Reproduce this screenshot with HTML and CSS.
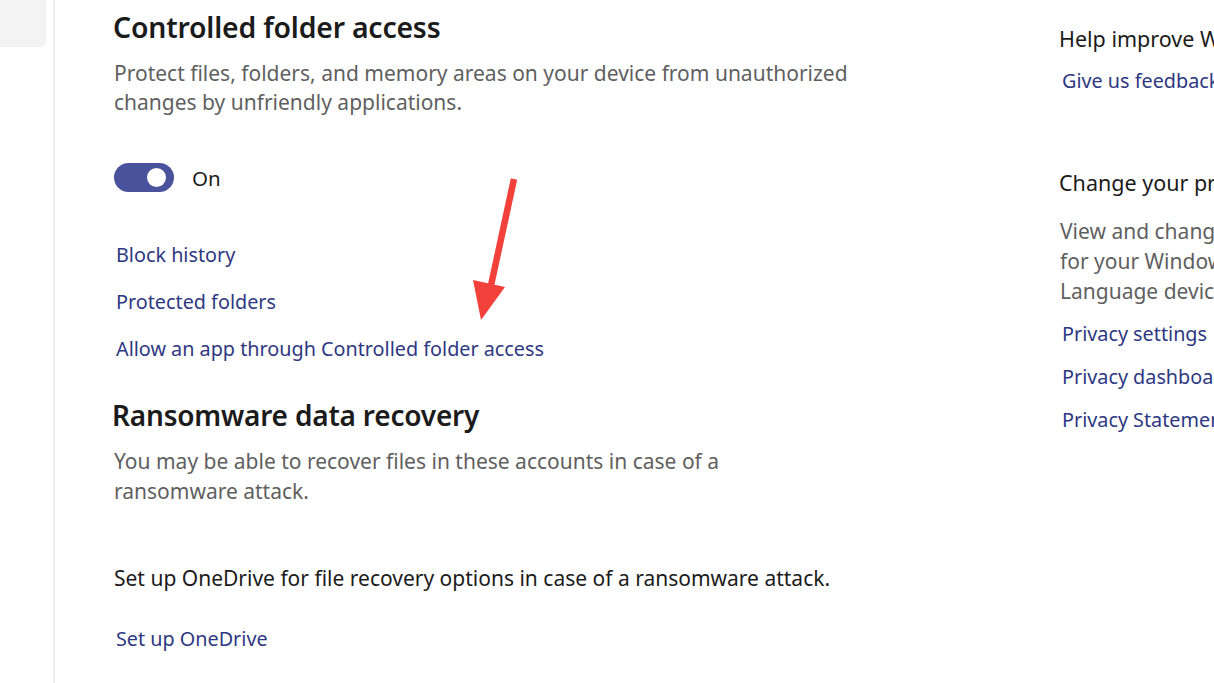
FILE: index.html
```html
<!DOCTYPE html>
<html lang="en">
<head>
<meta charset="utf-8">
<title>Controlled folder access</title>
<link rel="stylesheet" href="styles.css">
</head>
<body>
<div class="app">
  <nav class="nav">
    <div class="nav-item"></div>
  </nav>
  <main class="main">
    <h1 class="title">Controlled folder access</h1>
    <p class="desc desc-wide">Protect files, folders, and memory areas on your device from unauthorized changes by unfriendly applications.</p>
    <div class="toggle-row">
      <span class="toggle"><span class="knob"></span></span>
      <span class="toggle-label">On</span>
    </div>
    <ul class="links">
      <li><a href="#" class="link">Block history</a></li>
      <li><a href="#" class="link">Protected folders</a></li>
      <li><a href="#" class="link">Allow an app through Controlled folder access</a></li>
    </ul>
    <h2 class="title title-2">Ransomware data recovery</h2>
    <p class="desc desc-narrow">You may be able to recover files in these accounts in case of a ransomware attack.</p>
    <p class="plain">Set up OneDrive for file recovery options in case of a ransomware attack.</p>
    <a href="#" class="link link-last">Set up OneDrive</a>
  </main>
  <aside class="aside">
    <h3 class="side-title">Help improve Windows Security</h3>
    <a href="#" class="link side-link">Give us feedback</a>
    <h3 class="side-title side-title-2">Change your privacy settings</h3>
    <p class="side-desc">View and change privacy settings<br>for your Windows 10 device.<br>Language device settings</p>
    <ul class="side-links">
      <li><a href="#" class="link side-link">Privacy settings</a></li>
      <li><a href="#" class="link side-link">Privacy dashboard</a></li>
      <li><a href="#" class="link side-link">Privacy Statement</a></li>
    </ul>
  </aside>
  <svg class="arrow" width="1214" height="683" viewBox="0 0 1214 683" aria-hidden="true">
    <line x1="514" y1="179" x2="490" y2="290" stroke="#f2413a" stroke-width="6.5"/>
    <polygon points="473,280 505,287 481,320" fill="#f2413a"/>
  </svg>
</div>
</body>
</html>
```
FILE: styles.css
```css
* { box-sizing: border-box; }
html, body {
  margin: 0;
  padding: 0;
  background: #ffffff;
  overflow: hidden;
}
body {
  font-family: "Noto Sans", "Open Sans", "Liberation Sans", sans-serif;
  color: #1b1b1b;
  width: 1214px;
  height: 683px;
}
.app {
  position: relative;
  display: flex;
  height: 683px;
  width: 1214px;
  overflow: hidden;
}
.nav {
  flex: none;
  width: 55px;
  border-right: 2px solid #eeeeee;
}
.nav-item {
  width: 46px;
  height: 47px;
  background: #f3f3f3;
  border-bottom-right-radius: 6px;
}
.main {
  flex: none;
  width: 1004px;
  padding: 9px 0 0 58px;
}
.title {
  margin: 0;
  font-size: 28.4px;
  line-height: 36px;
  font-weight: 600;
  color: #1b1b1b;
  letter-spacing: -0.2px;
}
.desc {
  margin: 14px 0 0 1px;
  font-size: 21px;
  line-height: 29px;
  color: #5f5f5f;
}
.desc-wide { max-width: 790px; }
.desc-narrow { max-width: 680px; line-height: 30px; margin-top: 13px; }
.toggle-row {
  display: flex;
  align-items: center;
  margin-top: 46px;
  margin-left: 1px;
  height: 29px;
}
.toggle {
  position: relative;
  display: inline-block;
  width: 60px;
  height: 29px;
  border-radius: 15px;
  background: #4a529c;
}
.knob {
  position: absolute;
  right: 8px;
  top: 5px;
  width: 19px;
  height: 19px;
  border-radius: 50%;
  background: #ffffff;
}
.toggle-label {
  margin-left: 18px;
  font-size: 20.5px;
  color: #1b1b1b;
}
.links {
  list-style: none;
  margin: 49px 0 0 0;
  padding: 0;
  display: flex;
  flex-direction: column;
  gap: 19px;
}
.link {
  display: inline-block;
  font-size: 19.8px;
  line-height: 28px;
  color: #2e3882;
  text-decoration: none;
  margin-left: 3px;
}
.title-2 {
  margin-top: 34px;
  margin-left: -1px;
  font-size: 28px;
}
.plain {
  margin: 57px 0 0 1px;
  font-size: 21px;
  line-height: 30px;
  color: #1b1b1b;
}
.link-last { margin-top: 32px; }
.aside {
  flex: none;
  width: 300px;
  padding-top: 25px;
  white-space: nowrap;
}
.side-title {
  margin: 0;
  font-size: 21.5px;
  line-height: 28px;
  font-weight: 400;
  color: #1b1b1b;
}
.side-title-2 { margin-top: 74px; }
.side-link { display: block; margin-top: 14px; }
.side-desc {
  margin: 19px 0 0 1px;
  font-size: 21px;
  line-height: 30px;
  color: #5f5f5f;
}
.side-links {
  list-style: none;
  margin: 0;
  padding: 0;
  display: flex;
  flex-direction: column;
  gap: 1px;
}
.arrow {
  position: absolute;
  left: 0;
  top: 0;
  pointer-events: none;
}
```
